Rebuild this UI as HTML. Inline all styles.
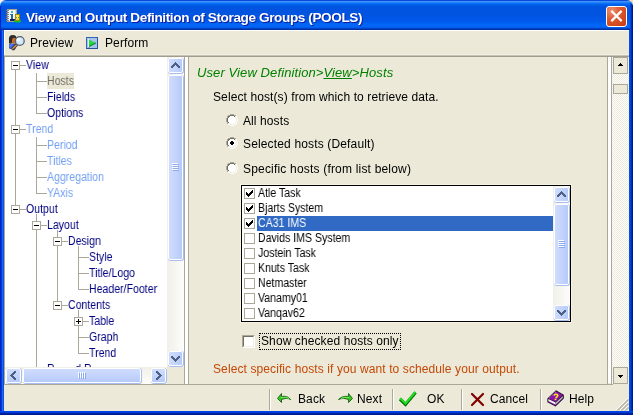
<!DOCTYPE html>
<html><head><meta charset="utf-8">
<style>
*{margin:0;padding:0;box-sizing:border-box}
html,body{width:633px;height:415px;overflow:hidden;background:#ece9d8}
body{position:relative;font-family:"Liberation Sans",sans-serif}
.a{position:absolute}
svg{position:absolute;overflow:visible}
.t{position:absolute;white-space:nowrap;will-change:transform;font-size:12px;line-height:14px;color:#000;letter-spacing:0.1px}
.tr{position:absolute;white-space:nowrap;will-change:transform;font-size:12px;line-height:16px;color:#000080;transform:scaleX(0.88);transform-origin:0 0}
.dis{color:#74a0f2}
.ln{position:absolute;background:#aca899}
.box{position:absolute;width:9px;height:9px;border:1px solid #aca899;background:#fff}
.box i{position:absolute;left:1px;top:3px;width:5px;height:1px;background:#000}
.box b{position:absolute;left:3px;top:1px;width:1px;height:5px;background:#000}
.xb{position:absolute;border-radius:2px;border:1px solid #fff;background:linear-gradient(135deg,#dae5fe 0%,#c8d7fc 45%,#b4c9f8 100%);box-shadow:inset -1px -1px 0 #a6bdf0}
.grip{position:absolute;height:1px;background:#8faaf0;box-shadow:0 -1px 0 #fff}
.chk{position:absolute;width:11px;height:11px;border:1px solid #aca899;background:#fff}

</style></head><body>
<div class="a" style="left:0px;top:0px;width:633px;height:415px;background:#ece9d8;"></div>
<div class="a" style="left:0px;top:0px;width:8px;height:8px;background:#f4f2ea;"></div>
<div class="a" style="left:625px;top:0px;width:8px;height:8px;background:#f9e2ae;"></div>
<div class="a" style="left:0;top:0;width:633px;height:30px;border-radius:6px 6px 0 0;background:linear-gradient(to bottom,#0b48dc 0px,#0b48dc 1px,#3c92f8 1px,#3c92f8 2px,#2483f6 2px,#2483f6 3px,#0a6ff4 3px,#0a6ff4 4px,#0264ec 4px,#0264ec 5px,#005ce6 5px,#005ce6 6px,#0056e0 6px,#0056e0 7px,#0055e0 7px,#0055e0 8px,#0054e0 8px,#0054e0 9px,#0054e0 9px,#0054e0 10px,#0054e0 10px,#0054e0 11px,#0054e0 11px,#0054e0 12px,#0054e0 12px,#0054e0 13px,#0054e0 13px,#0054e0 14px,#0054e0 14px,#0054e0 15px,#0054e2 15px,#0054e2 16px,#0055e4 16px,#0055e4 17px,#0055e5 17px,#0055e5 18px,#0056e6 18px,#0056e6 19px,#0057e8 19px,#0057e8 20px,#0058ea 20px,#0058ea 21px,#005aec 21px,#005aec 22px,#005eef 22px,#005eef 23px,#0062f3 23px,#0062f3 24px,#0065f6 24px,#0065f6 25px,#0066f8 25px,#0066f8 26px,#0064f4 26px,#0064f4 27px,#005aea 27px,#005aea 28px,#0044c8 28px,#0044c8 29px,#0030a0 29px,#0030a0 30px)"></div>
<div class="a" style="left:0px;top:6px;width:1px;height:405px;background:#0020c8;"></div>
<div class="a" style="left:1px;top:30px;width:1px;height:381px;background:#0838d8;"></div>
<div class="a" style="left:2px;top:30px;width:1px;height:381px;background:#166aee;"></div>
<div class="a" style="left:3px;top:30px;width:1px;height:381px;background:#0855dd;"></div>
<div class="a" style="left:629px;top:30px;width:1px;height:381px;background:#0050ee;"></div>
<div class="a" style="left:630px;top:30px;width:1px;height:381px;background:#0044dc;"></div>
<div class="a" style="left:631px;top:4px;width:1px;height:407px;background:#002eb0;"></div>
<div class="a" style="left:632px;top:5px;width:1px;height:406px;background:#001a94;"></div>
<div class="a" style="left:630px;top:3px;width:1px;height:27px;background:#0048d8;"></div>
<div class="a" style="left:0px;top:411px;width:633px;height:1px;background:#0046ea;"></div>
<div class="a" style="left:0px;top:412px;width:633px;height:1px;background:#0038d4;"></div>
<div class="a" style="left:0px;top:413px;width:633px;height:1px;background:#0024a8;"></div>
<div class="a" style="left:0px;top:414px;width:633px;height:1px;background:#001a90;"></div>
<svg style="left:0;top:0" width="30" height="30" shape-rendering="crispEdges">
<rect x="7" y="9" width="10" height="13" fill="#a8a290"/>
<rect x="8" y="10" width="8" height="11" fill="#f8f6ee"/>
<rect x="15" y="10" width="1" height="11" fill="#dcd8c8"/>
<g fill="#7c7c7c"><rect x="6" y="10" width="3" height="1"/><rect x="6" y="12" width="3" height="1"/><rect x="6" y="14" width="3" height="1"/><rect x="6" y="16" width="3" height="1"/><rect x="6" y="18" width="3" height="1"/><rect x="6" y="20" width="3" height="1"/></g>
<rect x="11" y="11" width="2" height="2" fill="#22c0d0"/>
<rect x="10" y="14" width="3" height="1" fill="#1a8aa0"/>
<rect x="11" y="14" width="2" height="5" fill="#1a6a9a"/>
<rect x="10" y="19" width="5" height="2" fill="#0c2470"/>
<ellipse cx="17.5" cy="21" rx="3.6" ry="1.5" fill="#10c020" shape-rendering="auto"/>
<rect x="15" y="14" width="5" height="7" fill="#9a8a10"/>
<rect x="16" y="15" width="3" height="2" fill="#f8ec50"/>
<rect x="16" y="18" width="3" height="2" fill="#e8d840"/>
<rect x="17" y="17" width="1" height="1" fill="#f8f4c0"/>
</svg>
<div class="a" style="left:26px;top:8px;font-weight:bold;font-size:13.6px;color:#fff;letter-spacing:-0.4px;line-height:20px;will-change:transform;text-shadow:1px 1px 0 #0a1e9f;white-space:nowrap">View and Output Definition of Storage Groups (POOLS)</div>
<div class="a" style="left:606px;top:6px;width:21px;height:21px;border:1px solid #fff;border-radius:3px;background:radial-gradient(circle at 25% 20%,#ee9070 0,#dd5a30 40%,#c83a0e 100%)"><svg style="left:0;top:0" width="19" height="19"><path d="M5.2 4.7 L13.8 13.3 M13.8 4.7 L5.2 13.3" stroke="#fff" stroke-width="2.3" stroke-linecap="square"/></svg></div>
<div class="a" style="left:4px;top:30px;width:625px;height:1px;background:#fff;"></div>
<div class="a" style="left:4px;top:30px;width:1px;height:25px;background:#fff;"></div>
<div class="a" style="left:4px;top:54px;width:625px;height:1px;background:#f1efe4;"></div>
<div class="a" style="left:4px;top:55px;width:625px;height:1px;background:#c7c3b3;"></div>
<div class="a" style="left:4px;top:56px;width:625px;height:1px;background:#a09d8e;"></div>
<svg style="left:0;top:30px" width="30" height="26">
<path d="M9.6 16 L12 20.2 L14.5 20.2 L16 18 Z" fill="#54545e"/>
<path d="M9 15.2 Q9 13.4 10.8 13.4 L15.6 13.4 L16 16.5 L12.6 19 L10 19 Q9 19 9 17.6 Z" fill="#3458d0"/>
<path d="M9.6 14.2 L13.4 14.2 L11.4 17.4 L9.6 17.4 Z" fill="#4a7af0"/>
<circle cx="12.8" cy="9" r="3.9" fill="#2c2c2c"/>
<rect x="9" y="9" width="2.4" height="4.6" fill="#2c2c2c"/>
<ellipse cx="14.1" cy="10.7" rx="2.2" ry="3" fill="#cc6a1e"/>
<path d="M12.2 19.2 L17 14.4" stroke="#3a3a48" stroke-width="3"/>
<path d="M12.4 18.9 L16.8 14.6" stroke="#f4a030" stroke-width="1.3"/>
<circle cx="19.8" cy="11" r="4.4" fill="#cfeafa" stroke="#585e70" stroke-width="1.3"/>
<circle cx="18.6" cy="9.8" r="1.8" fill="#f8fdff"/>
</svg>
<div class="t" style="left:30px;top:36px">Preview</div>
<svg style="left:86px;top:37px" width="12" height="12">
<rect x="0.5" y="0.5" width="11" height="11" fill="#a8c2ea" stroke="#3564b8"/>
<path d="M11.5 0.5 L11.5 11.5 L0.5 11.5" fill="none" stroke="#24509c"/>
<path d="M2 2 L10 6 L2 10 Z" fill="#22d848"/>
<path d="M2 10 L10 6" stroke="#168a2c" stroke-width="1.2"/>
<rect x="2" y="2" width="1" height="8" fill="#e8ffe8"/>
</svg>
<div class="t" style="left:105px;top:36px">Perform</div>
<div class="a" style="left:4px;top:57px;width:1px;height:327px;background:#aca899;"></div>
<div class="a" style="left:5px;top:57px;width:179px;height:327px;background:#fff;overflow:hidden">
<div class="tr" style="left:21px;top:0px;">View</div>
<div class="ln" style="left:15px;top:8px;width:6px;height:1px"></div>
<div class="a" style="left:42px;top:16px;width:27px;height:16px;background:#ece9d8;"></div>
<div class="tr" style="left:42px;top:16px;color:#716f64;">Hosts</div>
<div class="ln" style="left:31px;top:24px;width:11px;height:1px"></div>
<div class="tr" style="left:42px;top:32px;">Fields</div>
<div class="ln" style="left:31px;top:40px;width:11px;height:1px"></div>
<div class="tr" style="left:42px;top:48px;">Options</div>
<div class="ln" style="left:31px;top:56px;width:11px;height:1px"></div>
<div class="tr dis" style="left:21px;top:64px;">Trend</div>
<div class="ln" style="left:15px;top:72px;width:6px;height:1px"></div>
<div class="tr dis" style="left:42px;top:80px;">Period</div>
<div class="ln" style="left:31px;top:88px;width:11px;height:1px"></div>
<div class="tr dis" style="left:42px;top:96px;">Titles</div>
<div class="ln" style="left:31px;top:104px;width:11px;height:1px"></div>
<div class="tr dis" style="left:42px;top:112px;">Aggregation</div>
<div class="ln" style="left:31px;top:120px;width:11px;height:1px"></div>
<div class="tr dis" style="left:42px;top:128px;">YAxis</div>
<div class="ln" style="left:31px;top:136px;width:11px;height:1px"></div>
<div class="tr" style="left:21px;top:144px;">Output</div>
<div class="ln" style="left:15px;top:152px;width:6px;height:1px"></div>
<div class="tr" style="left:42px;top:160px;">Layout</div>
<div class="ln" style="left:36px;top:168px;width:6px;height:1px"></div>
<div class="tr" style="left:63px;top:176px;">Design</div>
<div class="ln" style="left:57px;top:184px;width:6px;height:1px"></div>
<div class="tr" style="left:84px;top:192px;">Style</div>
<div class="ln" style="left:73px;top:200px;width:11px;height:1px"></div>
<div class="tr" style="left:84px;top:208px;">Title/Logo</div>
<div class="ln" style="left:73px;top:216px;width:11px;height:1px"></div>
<div class="tr" style="left:84px;top:224px;">Header/Footer</div>
<div class="ln" style="left:73px;top:232px;width:11px;height:1px"></div>
<div class="tr" style="left:63px;top:240px;">Contents</div>
<div class="ln" style="left:57px;top:248px;width:6px;height:1px"></div>
<div class="tr" style="left:84px;top:256px;">Table</div>
<div class="ln" style="left:78px;top:264px;width:6px;height:1px"></div>
<div class="tr" style="left:84px;top:272px;">Graph</div>
<div class="ln" style="left:73px;top:280px;width:11px;height:1px"></div>
<div class="tr" style="left:84px;top:288px;">Trend</div>
<div class="ln" style="left:73px;top:296px;width:11px;height:1px"></div>
<div class="tr" style="left:42px;top:304px;">R<span style="color:transparent">ecor</span>d R<span style="color:transparent">ange</span></div>
<div class="ln" style="left:31px;top:312px;width:11px;height:1px"></div>
<div class="ln" style="left:10px;top:13px;width:1px;height:135px"></div>
<div class="ln" style="left:31px;top:16px;width:1px;height:41px"></div>
<div class="ln" style="left:31px;top:80px;width:1px;height:57px"></div>
<div class="ln" style="left:31px;top:157px;width:1px;height:187px"></div>
<div class="ln" style="left:52px;top:173px;width:1px;height:71px"></div>
<div class="ln" style="left:73px;top:189px;width:1px;height:44px"></div>
<div class="ln" style="left:73px;top:253px;width:1px;height:44px"></div>
<div class="box" style="left:6px;top:4px"><i></i></div>
<div class="box" style="left:6px;top:68px"><i></i></div>
<div class="box" style="left:6px;top:148px"><i></i></div>
<div class="box" style="left:27px;top:164px"><i></i></div>
<div class="box" style="left:48px;top:180px"><i></i></div>
<div class="box" style="left:48px;top:244px"><i></i></div>
<div class="box" style="left:69px;top:260px"><i></i><b></b></div>
</div>
<div class="a" style="left:167px;top:57px;width:17px;height:310px;background:linear-gradient(to right,#f0efe8,#fdfdfb)"></div>
<div class="a" style="left:168px;top:58px;width:16px;height:16px;border-radius:3px;background:#a9bef0"></div>
<div class="a" style="left:168px;top:58px;width:15px;height:15px;border-radius:2px;border:1px solid #fff;background:linear-gradient(to right,#cfdcfd,#c4d4fc 50%,#b6caf8)"></div>
<svg style="left:171px;top:62px" width="9" height="6" shape-rendering="crispEdges"><g fill="#4d6185"><rect x="4" y="0" width="1" height="1"/><rect x="3" y="1" width="3" height="1"/><rect x="2" y="2" width="5" height="1"/><rect x="1" y="3" width="3" height="1"/><rect x="5" y="3" width="3" height="1"/><rect x="0" y="4" width="3" height="1"/><rect x="6" y="4" width="3" height="1"/><rect x="0" y="5" width="2" height="1"/><rect x="7" y="5" width="2" height="1"/></g></svg>
<div class="a" style="left:168px;top:351px;width:16px;height:16px;border-radius:3px;background:#a9bef0"></div>
<div class="a" style="left:168px;top:351px;width:15px;height:15px;border-radius:2px;border:1px solid #fff;background:linear-gradient(to right,#cfdcfd,#c4d4fc 50%,#b6caf8)"></div>
<svg style="left:171px;top:356px" width="9" height="6" shape-rendering="crispEdges"><g fill="#4d6185"><rect x="0" y="0" width="2" height="1"/><rect x="7" y="0" width="2" height="1"/><rect x="0" y="1" width="3" height="1"/><rect x="6" y="1" width="3" height="1"/><rect x="1" y="2" width="3" height="1"/><rect x="5" y="2" width="3" height="1"/><rect x="2" y="3" width="5" height="1"/><rect x="3" y="4" width="3" height="1"/><rect x="4" y="5" width="1" height="1"/></g></svg>
<div class="a" style="left:168px;top:75px;width:16px;height:186px;border-radius:3px;background:#a9bef0"></div>
<div class="a" style="left:168px;top:75px;width:15px;height:185px;border-radius:2px;border:1px solid #fff;background:linear-gradient(to right,#cfdcfd,#c4d4fc 50%,#b6caf8)"></div>
<div class="a" style="left:172px;top:163px;width:6px;height:1px;background:#fff;"></div>
<div class="a" style="left:173px;top:164px;width:6px;height:1px;background:#8caaf2;"></div>
<div class="a" style="left:172px;top:165px;width:6px;height:1px;background:#fff;"></div>
<div class="a" style="left:173px;top:166px;width:6px;height:1px;background:#8caaf2;"></div>
<div class="a" style="left:172px;top:167px;width:6px;height:1px;background:#fff;"></div>
<div class="a" style="left:173px;top:168px;width:6px;height:1px;background:#8caaf2;"></div>
<div class="a" style="left:172px;top:169px;width:6px;height:1px;background:#fff;"></div>
<div class="a" style="left:173px;top:170px;width:6px;height:1px;background:#8caaf2;"></div>
<div class="a" style="left:5px;top:367px;width:162px;height:17px;background:linear-gradient(to bottom,#f0efe8,#fdfdfb)"></div>
<div class="a" style="left:6px;top:368px;width:16px;height:16px;border-radius:3px;background:#a9bef0"></div>
<div class="a" style="left:6px;top:368px;width:15px;height:15px;border-radius:2px;border:1px solid #fff;background:linear-gradient(to bottom,#cfdcfd,#c4d4fc 50%,#b6caf8)"></div>
<svg style="left:10px;top:371px" width="6" height="9" shape-rendering="crispEdges"><g fill="#4d6185"><rect x="4" y="0" width="2" height="1"/><rect x="3" y="1" width="3" height="1"/><rect x="2" y="2" width="3" height="1"/><rect x="1" y="3" width="3" height="1"/><rect x="0" y="4" width="3" height="1"/><rect x="1" y="5" width="3" height="1"/><rect x="2" y="6" width="3" height="1"/><rect x="3" y="7" width="3" height="1"/><rect x="4" y="8" width="2" height="1"/></g></svg>
<div class="a" style="left:151px;top:368px;width:16px;height:16px;border-radius:3px;background:#a9bef0"></div>
<div class="a" style="left:151px;top:368px;width:15px;height:15px;border-radius:2px;border:1px solid #fff;background:linear-gradient(to bottom,#cfdcfd,#c4d4fc 50%,#b6caf8)"></div>
<svg style="left:156px;top:371px" width="6" height="9" shape-rendering="crispEdges"><g fill="#4d6185"><rect x="0" y="0" width="2" height="1"/><rect x="0" y="1" width="3" height="1"/><rect x="1" y="2" width="3" height="1"/><rect x="2" y="3" width="3" height="1"/><rect x="3" y="4" width="3" height="1"/><rect x="2" y="5" width="3" height="1"/><rect x="1" y="6" width="3" height="1"/><rect x="0" y="7" width="3" height="1"/><rect x="0" y="8" width="2" height="1"/></g></svg>
<div class="a" style="left:23px;top:368px;width:119px;height:16px;border-radius:3px;background:#a9bef0"></div>
<div class="a" style="left:23px;top:368px;width:118px;height:15px;border-radius:2px;border:1px solid #fff;background:linear-gradient(to bottom,#cfdcfd,#c4d4fc 50%,#b6caf8)"></div>
<div class="a" style="left:78px;top:372px;width:1px;height:6px;background:#fff;"></div>
<div class="a" style="left:79px;top:373px;width:1px;height:6px;background:#8caaf2;"></div>
<div class="a" style="left:80px;top:372px;width:1px;height:6px;background:#fff;"></div>
<div class="a" style="left:81px;top:373px;width:1px;height:6px;background:#8caaf2;"></div>
<div class="a" style="left:82px;top:372px;width:1px;height:6px;background:#fff;"></div>
<div class="a" style="left:83px;top:373px;width:1px;height:6px;background:#8caaf2;"></div>
<div class="a" style="left:84px;top:372px;width:1px;height:6px;background:#fff;"></div>
<div class="a" style="left:85px;top:373px;width:1px;height:6px;background:#8caaf2;"></div>
<div class="a" style="left:167px;top:367px;width:17px;height:17px;background:#ece9d8;"></div>
<div class="a" style="left:184px;top:57px;width:1px;height:327px;background:#aca899;"></div>
<div class="a" style="left:185px;top:57px;width:3px;height:327px;background:#fff;"></div>
<div class="a" style="left:188px;top:57px;width:1px;height:327px;background:#aca899;"></div>
<div class="a" style="left:607px;top:57px;width:1px;height:327px;background:#aca899;"></div>
<div class="a" style="left:608px;top:57px;width:3px;height:326px;background:#fff;"></div>
<div class="a" style="left:611px;top:57px;width:1px;height:327px;background:#aca899;"></div>
<div class="a" style="left:4px;top:384px;width:609px;height:1px;background:#aca899;"></div>
<div class="a" style="left:612px;top:57px;width:17px;height:327px;background-color:#fff;background-image:linear-gradient(45deg,#ece9d8 25%,transparent 25%,transparent 75%,#ece9d8 75%),linear-gradient(45deg,#ece9d8 25%,transparent 25%,transparent 75%,#ece9d8 75%);background-size:2px 2px;background-position:0 0,1px 1px"></div>
<div class="a" style="left:613px;top:57px;width:15px;height:17px;background:#ece9d8;border:1px solid #aca899"></div>
<svg style="left:618px;top:63px" width="5" height="3" shape-rendering="crispEdges"><g fill="#000"><rect x="2" y="0" width="1" height="1"/><rect x="1" y="1" width="3" height="1"/><rect x="0" y="2" width="5" height="1"/></g></svg>
<div class="a" style="left:613px;top:84px;width:15px;height:10px;background:#ece9d8;border:1px solid #aca899"></div>
<div class="a" style="left:613px;top:367px;width:15px;height:17px;background:#ece9d8;border:1px solid #aca899"></div>
<svg style="left:618px;top:375px" width="5" height="3" shape-rendering="crispEdges"><g fill="#000"><rect x="0" y="0" width="5" height="1"/><rect x="1" y="1" width="3" height="1"/><rect x="2" y="2" width="1" height="1"/></g></svg>
<div class="t" style="left:197px;top:65px;font-size:13px;line-height:16px;font-style:italic;color:#008000;letter-spacing:0.1px">User View Definition&gt;<u>View</u>&gt;Hosts</div>
<div class="t" style="left:213px;top:90px">Select host(s) from which to retrieve data.</div>
<svg style="left:226px;top:114px" width="12" height="12" shape-rendering="crispEdges"><rect x="4" y="2" width="4" height="1" fill="#fff"/><rect x="3" y="3" width="6" height="1" fill="#fff"/><rect x="2" y="4" width="8" height="1" fill="#fff"/><rect x="2" y="5" width="8" height="1" fill="#fff"/><rect x="2" y="6" width="8" height="1" fill="#fff"/><rect x="2" y="7" width="8" height="1" fill="#fff"/><rect x="3" y="8" width="6" height="1" fill="#fff"/><rect x="4" y="9" width="4" height="1" fill="#fff"/><rect x="4" y="0" width="1" height="1" fill="#aca899"/><rect x="5" y="0" width="1" height="1" fill="#aca899"/><rect x="6" y="0" width="1" height="1" fill="#aca899"/><rect x="7" y="0" width="1" height="1" fill="#aca899"/><rect x="2" y="1" width="1" height="1" fill="#aca899"/><rect x="3" y="1" width="1" height="1" fill="#aca899"/><rect x="8" y="1" width="1" height="1" fill="#aca899"/><rect x="9" y="1" width="1" height="1" fill="#aca899"/><rect x="1" y="2" width="1" height="1" fill="#aca899"/><rect x="10" y="2" width="1" height="1" fill="#ffffff"/><rect x="1" y="3" width="1" height="1" fill="#aca899"/><rect x="10" y="3" width="1" height="1" fill="#ffffff"/><rect x="0" y="4" width="1" height="1" fill="#aca899"/><rect x="11" y="4" width="1" height="1" fill="#ffffff"/><rect x="0" y="5" width="1" height="1" fill="#aca899"/><rect x="11" y="5" width="1" height="1" fill="#ffffff"/><rect x="0" y="6" width="1" height="1" fill="#aca899"/><rect x="11" y="6" width="1" height="1" fill="#ffffff"/><rect x="0" y="7" width="1" height="1" fill="#aca899"/><rect x="11" y="7" width="1" height="1" fill="#ffffff"/><rect x="1" y="8" width="1" height="1" fill="#aca899"/><rect x="10" y="8" width="1" height="1" fill="#ffffff"/><rect x="1" y="9" width="1" height="1" fill="#aca899"/><rect x="10" y="9" width="1" height="1" fill="#ffffff"/><rect x="2" y="10" width="1" height="1" fill="#ffffff"/><rect x="3" y="10" width="1" height="1" fill="#ffffff"/><rect x="8" y="10" width="1" height="1" fill="#ffffff"/><rect x="9" y="10" width="1" height="1" fill="#ffffff"/><rect x="4" y="11" width="1" height="1" fill="#ffffff"/><rect x="5" y="11" width="1" height="1" fill="#ffffff"/><rect x="6" y="11" width="1" height="1" fill="#ffffff"/><rect x="7" y="11" width="1" height="1" fill="#ffffff"/><rect x="4" y="1" width="1" height="1" fill="#716f64"/><rect x="5" y="1" width="1" height="1" fill="#716f64"/><rect x="6" y="1" width="1" height="1" fill="#716f64"/><rect x="7" y="1" width="1" height="1" fill="#716f64"/><rect x="2" y="2" width="1" height="1" fill="#716f64"/><rect x="3" y="2" width="1" height="1" fill="#716f64"/><rect x="8" y="2" width="1" height="1" fill="#716f64"/><rect x="9" y="2" width="1" height="1" fill="#f1efe2"/><rect x="2" y="3" width="1" height="1" fill="#716f64"/><rect x="9" y="3" width="1" height="1" fill="#f1efe2"/><rect x="1" y="4" width="1" height="1" fill="#716f64"/><rect x="10" y="4" width="1" height="1" fill="#f1efe2"/><rect x="1" y="5" width="1" height="1" fill="#716f64"/><rect x="10" y="5" width="1" height="1" fill="#f1efe2"/><rect x="1" y="6" width="1" height="1" fill="#716f64"/><rect x="10" y="6" width="1" height="1" fill="#f1efe2"/><rect x="1" y="7" width="1" height="1" fill="#716f64"/><rect x="10" y="7" width="1" height="1" fill="#f1efe2"/><rect x="2" y="8" width="1" height="1" fill="#716f64"/><rect x="9" y="8" width="1" height="1" fill="#f1efe2"/><rect x="2" y="9" width="1" height="1" fill="#f1efe2"/><rect x="3" y="9" width="1" height="1" fill="#f1efe2"/><rect x="8" y="9" width="1" height="1" fill="#f1efe2"/><rect x="9" y="9" width="1" height="1" fill="#f1efe2"/><rect x="4" y="10" width="1" height="1" fill="#f1efe2"/><rect x="5" y="10" width="1" height="1" fill="#f1efe2"/><rect x="6" y="10" width="1" height="1" fill="#f1efe2"/><rect x="7" y="10" width="1" height="1" fill="#f1efe2"/></svg>
<svg style="left:226px;top:137px" width="12" height="12" shape-rendering="crispEdges"><rect x="4" y="2" width="4" height="1" fill="#fff"/><rect x="3" y="3" width="6" height="1" fill="#fff"/><rect x="2" y="4" width="8" height="1" fill="#fff"/><rect x="2" y="5" width="8" height="1" fill="#fff"/><rect x="2" y="6" width="8" height="1" fill="#fff"/><rect x="2" y="7" width="8" height="1" fill="#fff"/><rect x="3" y="8" width="6" height="1" fill="#fff"/><rect x="4" y="9" width="4" height="1" fill="#fff"/><rect x="4" y="0" width="1" height="1" fill="#aca899"/><rect x="5" y="0" width="1" height="1" fill="#aca899"/><rect x="6" y="0" width="1" height="1" fill="#aca899"/><rect x="7" y="0" width="1" height="1" fill="#aca899"/><rect x="2" y="1" width="1" height="1" fill="#aca899"/><rect x="3" y="1" width="1" height="1" fill="#aca899"/><rect x="8" y="1" width="1" height="1" fill="#aca899"/><rect x="9" y="1" width="1" height="1" fill="#aca899"/><rect x="1" y="2" width="1" height="1" fill="#aca899"/><rect x="10" y="2" width="1" height="1" fill="#ffffff"/><rect x="1" y="3" width="1" height="1" fill="#aca899"/><rect x="10" y="3" width="1" height="1" fill="#ffffff"/><rect x="0" y="4" width="1" height="1" fill="#aca899"/><rect x="11" y="4" width="1" height="1" fill="#ffffff"/><rect x="0" y="5" width="1" height="1" fill="#aca899"/><rect x="11" y="5" width="1" height="1" fill="#ffffff"/><rect x="0" y="6" width="1" height="1" fill="#aca899"/><rect x="11" y="6" width="1" height="1" fill="#ffffff"/><rect x="0" y="7" width="1" height="1" fill="#aca899"/><rect x="11" y="7" width="1" height="1" fill="#ffffff"/><rect x="1" y="8" width="1" height="1" fill="#aca899"/><rect x="10" y="8" width="1" height="1" fill="#ffffff"/><rect x="1" y="9" width="1" height="1" fill="#aca899"/><rect x="10" y="9" width="1" height="1" fill="#ffffff"/><rect x="2" y="10" width="1" height="1" fill="#ffffff"/><rect x="3" y="10" width="1" height="1" fill="#ffffff"/><rect x="8" y="10" width="1" height="1" fill="#ffffff"/><rect x="9" y="10" width="1" height="1" fill="#ffffff"/><rect x="4" y="11" width="1" height="1" fill="#ffffff"/><rect x="5" y="11" width="1" height="1" fill="#ffffff"/><rect x="6" y="11" width="1" height="1" fill="#ffffff"/><rect x="7" y="11" width="1" height="1" fill="#ffffff"/><rect x="4" y="1" width="1" height="1" fill="#716f64"/><rect x="5" y="1" width="1" height="1" fill="#716f64"/><rect x="6" y="1" width="1" height="1" fill="#716f64"/><rect x="7" y="1" width="1" height="1" fill="#716f64"/><rect x="2" y="2" width="1" height="1" fill="#716f64"/><rect x="3" y="2" width="1" height="1" fill="#716f64"/><rect x="8" y="2" width="1" height="1" fill="#716f64"/><rect x="9" y="2" width="1" height="1" fill="#f1efe2"/><rect x="2" y="3" width="1" height="1" fill="#716f64"/><rect x="9" y="3" width="1" height="1" fill="#f1efe2"/><rect x="1" y="4" width="1" height="1" fill="#716f64"/><rect x="10" y="4" width="1" height="1" fill="#f1efe2"/><rect x="1" y="5" width="1" height="1" fill="#716f64"/><rect x="10" y="5" width="1" height="1" fill="#f1efe2"/><rect x="1" y="6" width="1" height="1" fill="#716f64"/><rect x="10" y="6" width="1" height="1" fill="#f1efe2"/><rect x="1" y="7" width="1" height="1" fill="#716f64"/><rect x="10" y="7" width="1" height="1" fill="#f1efe2"/><rect x="2" y="8" width="1" height="1" fill="#716f64"/><rect x="9" y="8" width="1" height="1" fill="#f1efe2"/><rect x="2" y="9" width="1" height="1" fill="#f1efe2"/><rect x="3" y="9" width="1" height="1" fill="#f1efe2"/><rect x="8" y="9" width="1" height="1" fill="#f1efe2"/><rect x="9" y="9" width="1" height="1" fill="#f1efe2"/><rect x="4" y="10" width="1" height="1" fill="#f1efe2"/><rect x="5" y="10" width="1" height="1" fill="#f1efe2"/><rect x="6" y="10" width="1" height="1" fill="#f1efe2"/><rect x="7" y="10" width="1" height="1" fill="#f1efe2"/><rect x="5" y="4" width="2" height="1" fill="#000"/><rect x="4" y="5" width="4" height="1" fill="#000"/><rect x="4" y="6" width="4" height="1" fill="#000"/><rect x="5" y="7" width="2" height="1" fill="#000"/></svg>
<svg style="left:226px;top:162px" width="12" height="12" shape-rendering="crispEdges"><rect x="4" y="2" width="4" height="1" fill="#fff"/><rect x="3" y="3" width="6" height="1" fill="#fff"/><rect x="2" y="4" width="8" height="1" fill="#fff"/><rect x="2" y="5" width="8" height="1" fill="#fff"/><rect x="2" y="6" width="8" height="1" fill="#fff"/><rect x="2" y="7" width="8" height="1" fill="#fff"/><rect x="3" y="8" width="6" height="1" fill="#fff"/><rect x="4" y="9" width="4" height="1" fill="#fff"/><rect x="4" y="0" width="1" height="1" fill="#aca899"/><rect x="5" y="0" width="1" height="1" fill="#aca899"/><rect x="6" y="0" width="1" height="1" fill="#aca899"/><rect x="7" y="0" width="1" height="1" fill="#aca899"/><rect x="2" y="1" width="1" height="1" fill="#aca899"/><rect x="3" y="1" width="1" height="1" fill="#aca899"/><rect x="8" y="1" width="1" height="1" fill="#aca899"/><rect x="9" y="1" width="1" height="1" fill="#aca899"/><rect x="1" y="2" width="1" height="1" fill="#aca899"/><rect x="10" y="2" width="1" height="1" fill="#ffffff"/><rect x="1" y="3" width="1" height="1" fill="#aca899"/><rect x="10" y="3" width="1" height="1" fill="#ffffff"/><rect x="0" y="4" width="1" height="1" fill="#aca899"/><rect x="11" y="4" width="1" height="1" fill="#ffffff"/><rect x="0" y="5" width="1" height="1" fill="#aca899"/><rect x="11" y="5" width="1" height="1" fill="#ffffff"/><rect x="0" y="6" width="1" height="1" fill="#aca899"/><rect x="11" y="6" width="1" height="1" fill="#ffffff"/><rect x="0" y="7" width="1" height="1" fill="#aca899"/><rect x="11" y="7" width="1" height="1" fill="#ffffff"/><rect x="1" y="8" width="1" height="1" fill="#aca899"/><rect x="10" y="8" width="1" height="1" fill="#ffffff"/><rect x="1" y="9" width="1" height="1" fill="#aca899"/><rect x="10" y="9" width="1" height="1" fill="#ffffff"/><rect x="2" y="10" width="1" height="1" fill="#ffffff"/><rect x="3" y="10" width="1" height="1" fill="#ffffff"/><rect x="8" y="10" width="1" height="1" fill="#ffffff"/><rect x="9" y="10" width="1" height="1" fill="#ffffff"/><rect x="4" y="11" width="1" height="1" fill="#ffffff"/><rect x="5" y="11" width="1" height="1" fill="#ffffff"/><rect x="6" y="11" width="1" height="1" fill="#ffffff"/><rect x="7" y="11" width="1" height="1" fill="#ffffff"/><rect x="4" y="1" width="1" height="1" fill="#716f64"/><rect x="5" y="1" width="1" height="1" fill="#716f64"/><rect x="6" y="1" width="1" height="1" fill="#716f64"/><rect x="7" y="1" width="1" height="1" fill="#716f64"/><rect x="2" y="2" width="1" height="1" fill="#716f64"/><rect x="3" y="2" width="1" height="1" fill="#716f64"/><rect x="8" y="2" width="1" height="1" fill="#716f64"/><rect x="9" y="2" width="1" height="1" fill="#f1efe2"/><rect x="2" y="3" width="1" height="1" fill="#716f64"/><rect x="9" y="3" width="1" height="1" fill="#f1efe2"/><rect x="1" y="4" width="1" height="1" fill="#716f64"/><rect x="10" y="4" width="1" height="1" fill="#f1efe2"/><rect x="1" y="5" width="1" height="1" fill="#716f64"/><rect x="10" y="5" width="1" height="1" fill="#f1efe2"/><rect x="1" y="6" width="1" height="1" fill="#716f64"/><rect x="10" y="6" width="1" height="1" fill="#f1efe2"/><rect x="1" y="7" width="1" height="1" fill="#716f64"/><rect x="10" y="7" width="1" height="1" fill="#f1efe2"/><rect x="2" y="8" width="1" height="1" fill="#716f64"/><rect x="9" y="8" width="1" height="1" fill="#f1efe2"/><rect x="2" y="9" width="1" height="1" fill="#f1efe2"/><rect x="3" y="9" width="1" height="1" fill="#f1efe2"/><rect x="8" y="9" width="1" height="1" fill="#f1efe2"/><rect x="9" y="9" width="1" height="1" fill="#f1efe2"/><rect x="4" y="10" width="1" height="1" fill="#f1efe2"/><rect x="5" y="10" width="1" height="1" fill="#f1efe2"/><rect x="6" y="10" width="1" height="1" fill="#f1efe2"/><rect x="7" y="10" width="1" height="1" fill="#f1efe2"/></svg>
<div class="t" style="left:243px;top:114px">All hosts</div>
<div class="t" style="left:243px;top:137px;letter-spacing:0.15px">Selected hosts (Default)</div>
<div class="t" style="left:243px;top:162px;letter-spacing:0.19px">Specific hosts (from list below)</div>
<div class="a" style="left:240px;top:184px;width:332px;height:139px;background:#f7f3e3;"></div>
<div class="a" style="left:241px;top:185px;width:330px;height:137px;background:#fff;border:1px solid #000"></div>
<div class="chk" style="left:244px;top:188px"><svg style="left:1px;top:1px" width="7" height="7"><path d="M0 2h1v1h1v1h1v-1h1v-1h1v-1h1v-1h1v3h-1v1h-1v1h-1v1h-1v1h-1v-1h-1v-1h-1z" fill="#000"/></svg></div>
<div class="tr" style="left:258px;top:186px;line-height:15px;color:#000">Atle Task</div>
<div class="chk" style="left:244px;top:203px"><svg style="left:1px;top:1px" width="7" height="7"><path d="M0 2h1v1h1v1h1v-1h1v-1h1v-1h1v-1h1v3h-1v1h-1v1h-1v1h-1v1h-1v-1h-1v-1h-1z" fill="#000"/></svg></div>
<div class="tr" style="left:258px;top:201px;line-height:15px;color:#000">Bjarts System</div>
<div class="chk" style="left:244px;top:218px"><svg style="left:1px;top:1px" width="7" height="7"><path d="M0 2h1v1h1v1h1v-1h1v-1h1v-1h1v-1h1v3h-1v1h-1v1h-1v1h-1v1h-1v-1h-1v-1h-1z" fill="#000"/></svg></div>
<div class="a" style="left:257px;top:216px;width:296px;height:15px;background:#316ac5;"></div>
<div class="tr" style="left:258px;top:216px;line-height:15px;color:#fff">CA31 IMS</div>
<div class="chk" style="left:244px;top:233px"></div>
<div class="tr" style="left:258px;top:231px;line-height:15px;color:#000">Davids IMS System</div>
<div class="chk" style="left:244px;top:248px"></div>
<div class="tr" style="left:258px;top:246px;line-height:15px;color:#000">Jostein Task</div>
<div class="chk" style="left:244px;top:263px"></div>
<div class="tr" style="left:258px;top:261px;line-height:15px;color:#000">Knuts Task</div>
<div class="chk" style="left:244px;top:278px"></div>
<div class="tr" style="left:258px;top:276px;line-height:15px;color:#000">Netmaster</div>
<div class="chk" style="left:244px;top:293px"></div>
<div class="tr" style="left:258px;top:291px;line-height:15px;color:#000">Vanamy01</div>
<div class="chk" style="left:244px;top:308px"></div>
<div class="tr" style="left:258px;top:306px;line-height:15px;color:#000">Vanqav62</div>
<div class="a" style="left:553px;top:186px;width:17px;height:135px;background:linear-gradient(to right,#f0efe8,#fdfdfb)"></div>
<div class="a" style="left:554px;top:187px;width:16px;height:16px;border-radius:3px;background:#a9bef0"></div>
<div class="a" style="left:554px;top:187px;width:15px;height:15px;border-radius:2px;border:1px solid #fff;background:linear-gradient(to right,#cfdcfd,#c4d4fc 50%,#b6caf8)"></div>
<svg style="left:557px;top:191px" width="9" height="6" shape-rendering="crispEdges"><g fill="#4d6185"><rect x="4" y="0" width="1" height="1"/><rect x="3" y="1" width="3" height="1"/><rect x="2" y="2" width="5" height="1"/><rect x="1" y="3" width="3" height="1"/><rect x="5" y="3" width="3" height="1"/><rect x="0" y="4" width="3" height="1"/><rect x="6" y="4" width="3" height="1"/><rect x="0" y="5" width="2" height="1"/><rect x="7" y="5" width="2" height="1"/></g></svg>
<div class="a" style="left:554px;top:305px;width:16px;height:16px;border-radius:3px;background:#a9bef0"></div>
<div class="a" style="left:554px;top:305px;width:15px;height:15px;border-radius:2px;border:1px solid #fff;background:linear-gradient(to right,#cfdcfd,#c4d4fc 50%,#b6caf8)"></div>
<svg style="left:557px;top:310px" width="9" height="6" shape-rendering="crispEdges"><g fill="#4d6185"><rect x="0" y="0" width="2" height="1"/><rect x="7" y="0" width="2" height="1"/><rect x="0" y="1" width="3" height="1"/><rect x="6" y="1" width="3" height="1"/><rect x="1" y="2" width="3" height="1"/><rect x="5" y="2" width="3" height="1"/><rect x="2" y="3" width="5" height="1"/><rect x="3" y="4" width="3" height="1"/><rect x="4" y="5" width="1" height="1"/></g></svg>
<div class="a" style="left:554px;top:204px;width:16px;height:82px;border-radius:3px;background:#a9bef0"></div>
<div class="a" style="left:554px;top:204px;width:15px;height:81px;border-radius:2px;border:1px solid #fff;background:linear-gradient(to right,#cfdcfd,#c4d4fc 50%,#b6caf8)"></div>
<div class="a" style="left:558px;top:240px;width:6px;height:1px;background:#fff;"></div>
<div class="a" style="left:559px;top:241px;width:6px;height:1px;background:#8caaf2;"></div>
<div class="a" style="left:558px;top:242px;width:6px;height:1px;background:#fff;"></div>
<div class="a" style="left:559px;top:243px;width:6px;height:1px;background:#8caaf2;"></div>
<div class="a" style="left:558px;top:244px;width:6px;height:1px;background:#fff;"></div>
<div class="a" style="left:559px;top:245px;width:6px;height:1px;background:#8caaf2;"></div>
<div class="a" style="left:558px;top:246px;width:6px;height:1px;background:#fff;"></div>
<div class="a" style="left:559px;top:247px;width:6px;height:1px;background:#8caaf2;"></div>
<div class="a" style="left:242px;top:335px;width:13px;height:13px;background:#fff;border-top:1px solid #aca899;border-left:1px solid #aca899;border-right:1px solid #fff;border-bottom:1px solid #fff"><div class="a" style="left:0;top:0;width:11px;height:11px;border-top:1px solid #716f64;border-left:1px solid #716f64;border-right:1px solid #f1efe2;border-bottom:1px solid #f1efe2"></div></div>
<div class="a" style="left:259px;top:333px;width:142px;height:17px;border:1px dotted #000"></div>
<div class="t" style="left:261px;top:334px">Show checked hosts only</div>
<div class="t" style="left:213px;top:362px;color:#c44806;letter-spacing:0.1px">Select specific hosts if you want to schedule your output.</div>
<div class="a" style="left:269px;top:389px;width:1px;height:21px;background:#aca899;"></div>
<div class="a" style="left:270px;top:389px;width:1px;height:21px;background:#fff;"></div>
<div class="a" style="left:392px;top:389px;width:1px;height:21px;background:#aca899;"></div>
<div class="a" style="left:393px;top:389px;width:1px;height:21px;background:#fff;"></div>
<div class="a" style="left:461px;top:389px;width:1px;height:21px;background:#aca899;"></div>
<div class="a" style="left:462px;top:389px;width:1px;height:21px;background:#fff;"></div>
<div class="a" style="left:540px;top:389px;width:1px;height:21px;background:#aca899;"></div>
<div class="a" style="left:541px;top:389px;width:1px;height:21px;background:#fff;"></div>
<svg style="left:270px;top:385px" width="30" height="26">
<path d="M7.5 13.5 L11.5 8.5 L11.5 11.5 C15 11 18.5 11.5 20.5 14.5 C18 13 15 13.2 11.5 14.5 L11.5 17.5 Z" fill="#34c81c" stroke="#1a5a1a" stroke-width="0.9" stroke-linejoin="round"/>
<path d="M11 12.5 C14 12.2 17 12.5 19 13.5" stroke="#7cf060" stroke-width="1" fill="none"/>
</svg>
<div class="t" style="left:298px;top:392px">Back</div>
<svg style="left:330px;top:385px" width="30" height="26">
<path d="M22.5 13.5 L18.5 8.5 L18.5 11.5 C15 11 11.5 11.5 8.5 14.5 C12 13 15 13.2 18.5 14.5 L18.5 17.5 Z" fill="#34c81c" stroke="#1a5a1a" stroke-width="0.9" stroke-linejoin="round"/>
<path d="M19 12.5 C16 12.2 13 12.5 11 13.5" stroke="#7cf060" stroke-width="1" fill="none"/>
</svg>
<div class="t" style="left:357px;top:392px">Next</div>
<svg style="left:395px;top:386px" width="26" height="24">
<path d="M5 13 L10.5 18.5 L20.5 6.5" fill="none" stroke="#007000" stroke-width="3.2" stroke-linejoin="miter"/>
<path d="M5 12.2 L10.5 17.5 L20.5 5.8" fill="none" stroke="#22dd22" stroke-width="2"/>
</svg>
<div class="t" style="left:427px;top:392px">OK</div>
<svg style="left:464px;top:386px" width="26" height="24">
<path d="M8 8 L19 19 M19 8 L8 19" stroke="#800000" stroke-width="2.2" stroke-linecap="round"/>
</svg>
<div class="t" style="left:490px;top:392px">Cancel</div>
<svg style="left:545px;top:388px" width="22" height="22">
<path d="M11 2.3 L18.8 6.8 L18.8 10.6 L10.6 18.4 L2.4 14.2 L2.4 10.4 Z" fill="#1c1020"/>
<path d="M3.4 11 L10.6 14.6 L10.6 17 L3.4 13.4 Z" fill="#f4f4f4"/>
<path d="M10.6 14.6 L17.8 8 L17.8 10.2 L10.6 17 Z" fill="#b8b0c0"/>
<path d="M3.4 13.6 L10.6 17.2" stroke="#9010b0" stroke-width="0.9"/>
<path d="M10.6 17.2 L17.8 10.4" stroke="#60107a" stroke-width="0.9"/>
<path d="M11 3.3 L17.8 7 L10.6 13.8 L3.4 10.4 Z" fill="#8c12ac"/>
<path d="M4.2 10 L11 3.8" stroke="#c890e0" stroke-width="0.8" stroke-dasharray="1 1"/>
<path d="M9 7.6 C9.4 6 12.6 5.8 12.8 7.4 C12.9 8.6 11.2 8.9 10.9 10" fill="none" stroke="#f8e818" stroke-width="1.6"/>
<rect x="9.6" y="10.6" width="1.8" height="1.5" fill="#f8e818"/>
</svg>
<div class="t" style="left:569px;top:392px">Help</div>
<svg style="left:613px;top:395px" width="16" height="16">
<path d="M15 3 L3 15 M15 7 L7 15 M15 11 L11 15" stroke="#fff" stroke-width="1"/>
<path d="M15.5 4 L4 15.5 M15.5 5 L5 15.5 M15.5 8 L8 15.5 M15.5 9 L9 15.5 M15.5 12 L12 15.5 M15.5 13 L13 15.5" stroke="#aca899" stroke-width="1"/>
</svg>
</body></html>
